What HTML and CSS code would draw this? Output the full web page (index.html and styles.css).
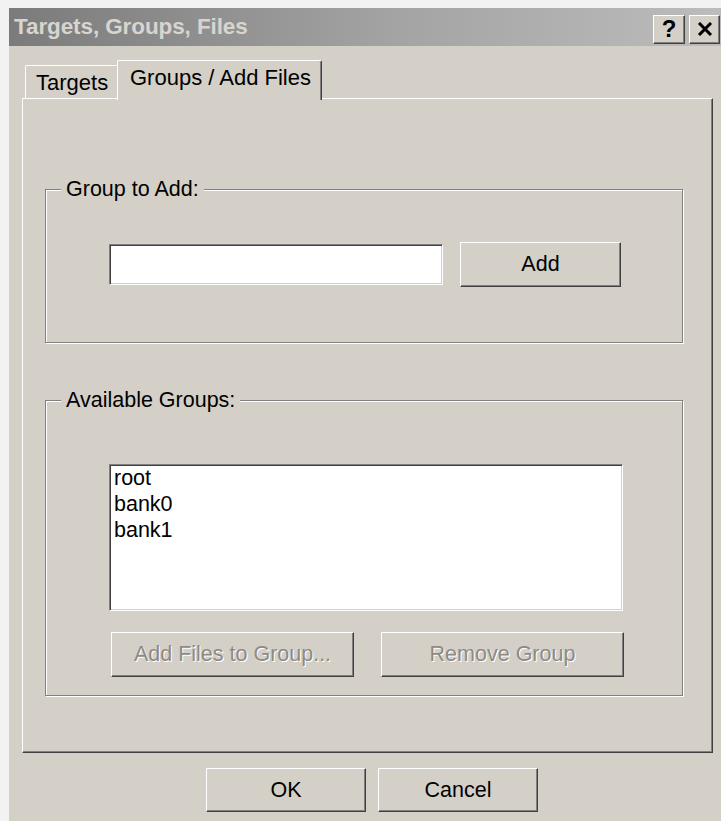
FILE: index.html
```html
<!DOCTYPE html>
<html lang="en">
<head>
<meta charset="utf-8">
<title>Targets, Groups, Files</title>
<link rel="stylesheet" href="styles.css">
</head>
<body>
<div class="dialog">
  <div class="titlebar">
    <span class="title">Targets, Groups, Files</span>
    <div class="caption-buttons">
      <button class="caption-btn help" type="button">?</button>
      <button class="caption-btn close" type="button" aria-label="Close">
        <svg width="16" height="14" viewBox="0 0 16 14">
          <path d="M2 1 L14 13 M14 1 L2 13" stroke="#000" stroke-width="3" fill="none"/>
        </svg>
      </button>
    </div>
  </div>

  <div class="body">
    <div class="tabs">
      <div class="tab">Targets</div>
      <div class="tab active">Groups / Add Files</div>
    </div>

    <div class="panel">
      <fieldset class="group group-add">
        <legend>Group to Add:</legend>
        <div class="add-row">
          <input class="textbox" type="text">
          <button class="btn btn-add" type="button">Add</button>
        </div>
      </fieldset>

      <fieldset class="group group-list">
        <legend>Available Groups:</legend>
        <ul class="listbox">
          <li>root</li>
          <li>bank0</li>
          <li>bank1</li>
        </ul>
        <div class="list-actions">
          <button class="btn btn-wide" type="button" disabled>Add Files to Group...</button>
          <button class="btn btn-wide" type="button" disabled>Remove Group</button>
        </div>
      </fieldset>
    </div>

    <div class="footer">
      <button class="btn btn-footer" type="button">OK</button>
      <button class="btn btn-footer" type="button">Cancel</button>
    </div>
  </div>
</div>
</body>
</html>
```

FILE: styles.css
```css
* {
  box-sizing: border-box;
}

html, body {
  margin: 0;
  padding: 0;
}

body {
  background: #f2f2f2;
  padding: 8px 0 0 9px;
  font-family: "Liberation Sans", Arial, sans-serif;
  font-size: 21.5px;
  color: #000;
  overflow: hidden;
}

.dialog {
  width: 712px;
  height: 813px;
  background: #d4d0c8;
}

/* caption bar */
.titlebar {
  height: 38px;
  display: flex;
  align-items: center;
  justify-content: space-between;
  padding: 0 1px 0 5px;
  background: linear-gradient(to right, #7b7b7b 0%, #a4a4a4 55%, #bcbcbc 100%);
}

.title {
  font-weight: bold;
  font-size: 22.5px;
  color: #d8d5d0;
  letter-spacing: -0.1px;
}

.caption-buttons {
  display: flex;
  gap: 4px;
  margin-top: 4px;
}

.caption-btn {
  width: 32px;
  height: 29px;
  padding: 0;
  margin: 0;
  display: flex;
  align-items: center;
  justify-content: center;
  background: #d4d0c8;
  border: 1px solid;
  border-color: #fff #404040 #404040 #fff;
  box-shadow: inset -1px -1px 0 #808080;
  font-family: "Liberation Sans", Arial, sans-serif;
  font-weight: bold;
  font-size: 24px;
  line-height: 1;
  color: #000;
}

.caption-btn.close {
  width: 31px;
}

/* dialog body */
.body {
  padding: 14px 8px 0 13px;
}

.tabs {
  display: flex;
  align-items: flex-end;
  height: 38px;
  padding-left: 3px;
  position: relative;
  z-index: 1;
}

.tab {
  height: 33px;
  padding: 5px 8px 0 10px;
  line-height: 24px;
  font-size: 22px;
  white-space: nowrap;
  background: #d4d0c8;
  border-top: 1px solid #fff;
  border-left: 1px solid #fff;
  border-right: 1px solid #404040;
  box-shadow: inset -1px 0 0 #808080;
  border-radius: 2px 2px 0 0;
}

.tab:first-child {
  width: 94px;
}

.tab.active {
  height: 40px;
  margin-bottom: -2px;
  margin-left: -2px;
  padding: 5px 10px 0 12px;
  width: 205px;
}

.panel {
  height: 655px;
  padding: 78px 28px 0 22px;
  border-top: 1px solid #fff;
  border-left: 1px solid #fff;
  border-right: 1px solid #404040;
  border-bottom: 1px solid #404040;
  box-shadow: inset -1px -1px 0 #808080;
}

/* etched group frames */
.group {
  margin: 0;
  width: 638px;
  min-width: 0;
  border: 1px solid #808080;
  box-shadow: 1px 1px 0 #fff, inset 1px 1px 0 #fff;
}

.group legend {
  margin-left: -48px;
  padding: 0 5px 0 5px;
  line-height: 24px;
  background: #d4d0c8;
}

.group-add {
  padding: 41px 0 55px 63px;
}

.group-list {
  margin-top: 45px;
  padding: 52px 0 18px 63px;
}

.add-row {
  display: flex;
  align-items: center;
}

.textbox {
  width: 334px;
  height: 41px;
  margin: 0;
  padding: 0 4px;
  background: #fff;
  border: 1px solid;
  border-color: #808080 #fff #fff #808080;
  box-shadow: inset 1px 1px 0 #404040, inset -1px -1px 0 #d4d0c8;
  font: inherit;
  outline: none;
}

.btn {
  margin: 0;
  padding: 0;
  background: #d4d0c8;
  border: 1px solid;
  border-color: #fff #404040 #404040 #fff;
  box-shadow: inset -1px -1px 0 #808080;
  font-family: "Liberation Sans", Arial, sans-serif;
  font-size: 21.5px;
  color: #000;
}

.btn:disabled {
  color: #8d8a85;
  text-shadow: 1px 1px 0 #fff;
}

.btn-add {
  width: 161px;
  height: 45px;
  margin-left: 17px;
}

.listbox {
  list-style: none;
  margin: 0;
  width: 514px;
  height: 147px;
  padding: 0 0 0 3px;
  background: #fff;
  border: 1px solid;
  border-color: #808080 #fff #fff #808080;
  box-shadow: inset 1px 1px 0 #404040, inset -1px -1px 0 #d4d0c8;
  line-height: 26px;
}

.listbox li {
  padding-left: 1px;
}

.list-actions {
  display: flex;
  gap: 27px;
  margin: 21px 0 0 2px;
}

.btn-wide {
  width: 243px;
  height: 45px;
}

.footer {
  display: flex;
  gap: 12px;
  padding: 15px 0 0 184px;
}

.btn-footer {
  width: 160px;
  height: 44px;
}
```
